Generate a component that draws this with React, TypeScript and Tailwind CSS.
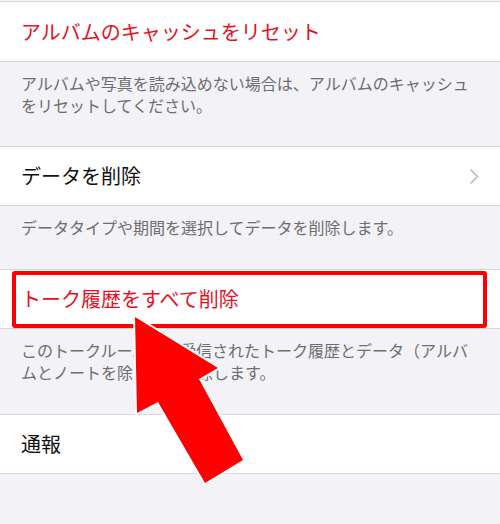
import React from 'react';

function Row({ children, red, chevron, tall }: { children: React.ReactNode; red?: boolean; chevron?: boolean; tall?: boolean }) {
    return (
        <div className={`${tall ? 'h-[61px]' : 'h-[60px]'} bg-white border-y border-[#d8d8dc] flex items-center justify-between pl-[21px] pr-[20px]`}>
            <span className={`text-[20px] leading-none ${red ? 'text-[#e8101e]' : 'text-[#111111]'}`}>{children}</span>
            {chevron && (
                <svg width="11" height="17" viewBox="0 0 11 17" fill="none">
                    <polyline points="1.5,1.5 8.5,8.5 1.5,15.5" stroke="#c7c7cc" strokeWidth="2" />
                </svg>
            )}
        </div>
    );
}

function Note({ children, className }: { children: React.ReactNode; className: string }) {
    return (
        <div className={`px-[21px] pt-[10px] text-[16px] leading-[22px] text-[#6d6d72] ${className}`}>
            {children}
        </div>
    );
}

export default function App() {
    return (
        <div
            className="relative w-[500px] h-[524px] overflow-hidden bg-[#f2f2f7] pt-px"
            style={{ fontFamily: '"Noto Sans CJK JP", "Noto Sans", sans-serif' }}
        >
            <Row red tall>アルバムのキャッシュをリセット</Row>
            <Note className="h-[84px]">
                アルバムや写真を読み込めない場合は、アルバムのキャッシュをリセットしてください。
            </Note>

            <Row chevron>データを削除</Row>
            <Note className="h-[63px]">データタイプや期間を選択してデータを削除します。</Note>

            {/* highlighted row */}
            <div className="relative">
                <Row red>トーク履歴をすべて削除</Row>
                <div className="absolute left-[12px] right-[13px] top-[2px] bottom-[1px] border-4 border-[#ff0000] rounded-[3px]" />
            </div>
            <Note className="h-[85px]">
                このトークルームで送受信されたトーク履歴とデータ（アルバムとノートを除く）を削除します。
            </Note>

            <Row>通報</Row>

            {/* arrow annotation */}
            <svg className="absolute inset-0 pointer-events-none" width="500" height="524" viewBox="0 0 500 524">
                <polygon
                    points="135,317 137,413 158,402 205,483 243,460 199,379 218,368"
                    fill="#ff0000"
                    stroke="#ffffff"
                    strokeWidth="4"
                    strokeLinejoin="miter"
                    paintOrder="stroke"
                />
            </svg>
        </div>
    );
}
